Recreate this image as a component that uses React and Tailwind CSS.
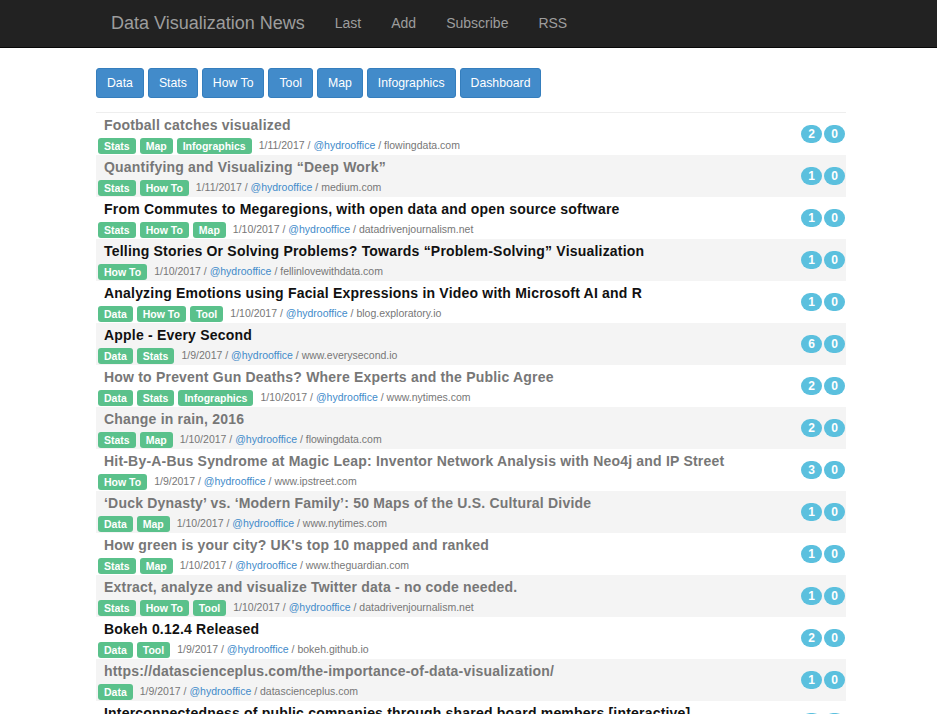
import React from 'react';

const NAV_LINKS = ['Last', 'Add', 'Subscribe', 'RSS'];
const CATEGORIES = ['Data', 'Stats', 'How To', 'Tool', 'Map', 'Infographics', 'Dashboard'];

const POSTS = [
  { title: 'Football catches visualized', seen: true, tags: ['Stats', 'Map', 'Infographics'], date: '1/11/2017', site: 'flowingdata.com', up: 2 },
  { title: 'Quantifying and Visualizing \u201cDeep Work\u201d', seen: true, tags: ['Stats', 'How To'], date: '1/11/2017', site: 'medium.com', up: 1 },
  { title: 'From Commutes to Megaregions, with open data and open source software', tags: ['Stats', 'How To', 'Map'], date: '1/10/2017', site: 'datadrivenjournalism.net', up: 1 },
  { title: 'Telling Stories Or Solving Problems? Towards \u201cProblem-Solving\u201d Visualization', tags: ['How To'], date: '1/10/2017', site: 'fellinlovewithdata.com', up: 1 },
  { title: 'Analyzing Emotions using Facial Expressions in Video with Microsoft AI and R', tags: ['Data', 'How To', 'Tool'], date: '1/10/2017', site: 'blog.exploratory.io', up: 1 },
  { title: 'Apple - Every Second', tags: ['Data', 'Stats'], date: '1/9/2017', site: 'www.everysecond.io', up: 6 },
  { title: 'How to Prevent Gun Deaths? Where Experts and the Public Agree', seen: true, tags: ['Data', 'Stats', 'Infographics'], date: '1/10/2017', site: 'www.nytimes.com', up: 2 },
  { title: 'Change in rain, 2016', seen: true, tags: ['Stats', 'Map'], date: '1/10/2017', site: 'flowingdata.com', up: 2 },
  { title: 'Hit-By-A-Bus Syndrome at Magic Leap: Inventor Network Analysis with Neo4j and IP Street', seen: true, tags: ['How To'], date: '1/9/2017', site: 'www.ipstreet.com', up: 3 },
  { title: '\u2018Duck Dynasty\u2019 vs. \u2018Modern Family\u2019: 50 Maps of the U.S. Cultural Divide', seen: true, tags: ['Data', 'Map'], date: '1/10/2017', site: 'www.nytimes.com', up: 1 },
  { title: "How green is your city? UK's top 10 mapped and ranked", seen: true, tags: ['Stats', 'Map'], date: '1/10/2017', site: 'www.theguardian.com', up: 1 },
  { title: 'Extract, analyze and visualize Twitter data - no code needed.', seen: true, tags: ['Stats', 'How To', 'Tool'], date: '1/10/2017', site: 'datadrivenjournalism.net', up: 1 },
  { title: 'Bokeh 0.12.4 Released', tags: ['Data', 'Tool'], date: '1/9/2017', site: 'bokeh.github.io', up: 2 },
  { title: 'https://datascienceplus.com/the-importance-of-data-visualization/', seen: true, tags: ['Data'], date: '1/9/2017', site: 'datascienceplus.com', up: 1 },
  { title: 'Interconnectedness of public companies through shared board members [interactive]', tags: ['Data', 'Map'], date: '1/9/2017', site: 'www.example.com', up: 1 },
];

const Badge = ({ value }) => (
  <span className="w-[21px] h-[18px] rounded-full bg-[#5bc0de] text-white text-[12px] font-bold leading-none flex items-center justify-center">
    {value}
  </span>
);

const PostRow = ({ post, striped }) => (
  <div className={`flex items-center ${striped ? 'bg-[#f4f4f4]' : 'bg-white'}`}>
    <div className="flex-1 min-w-0 pt-[2px] pb-[1px]">
      {/* Title */}
      <div
        className={`pl-2 h-5 leading-5 text-[14px] font-bold tracking-[0.2px] whitespace-nowrap ${
          post.seen ? 'text-[#777777]' : 'text-[#111111]'
        }`}
      >
        {post.title}
      </div>
      {/* Tags + meta */}
      <div className="mt-[3px] pl-[2px] flex items-center h-4">
        <div className="flex gap-1">
          {post.tags.map((tag) => (
            <span key={tag} className="h-4 px-[6px] rounded-[3px] bg-[#5ac18b] text-white text-[10.5px] font-bold leading-4">
              {tag}
            </span>
          ))}
        </div>
        <span className="ml-[7px] text-[10.5px] text-[#777777] whitespace-nowrap">
          {post.date} / <span className="text-[#428bca]">@hydrooffice</span> / {post.site}
        </span>
      </div>
    </div>
    <div className="flex gap-[2px] pr-px">
      <Badge value={post.up} />
      <Badge value={0} />
    </div>
  </div>
);

export default function App() {
  return (
    <div className="min-h-screen bg-white font-['Liberation_Sans',Arial,sans-serif]">
      {/* Navbar */}
      <nav className="h-12 bg-[#222222] border-b border-[#080808]">
        <div className="ml-[96px] flex items-center h-[47px]">
          <span className="px-[15px] text-[18px] text-[#9d9d9d]">Data Visualization News</span>
          {NAV_LINKS.map((link) => (
            <span key={link} className="px-[15px] text-[14px] text-[#9d9d9d]">
              {link}
            </span>
          ))}
        </div>
      </nav>

      <div className="ml-[96px] w-[750px]">
        {/* Category buttons */}
        <div className="mt-5 flex gap-1">
          {CATEGORIES.map((cat) => (
            <button
              key={cat}
              className="h-[30px] px-[10px] rounded-[3px] bg-[#428bca] border border-[#357ebd] text-white text-[12.25px]"
            >
              {cat}
            </button>
          ))}
        </div>

        <div className="mt-[14px] border-t border-[#eeeeee]" />

        {/* Posts */}
        <div>
          {POSTS.map((post, i) => (
            <PostRow key={i} post={post} striped={i % 2 === 1} />
          ))}
        </div>
      </div>
    </div>
  );
}
